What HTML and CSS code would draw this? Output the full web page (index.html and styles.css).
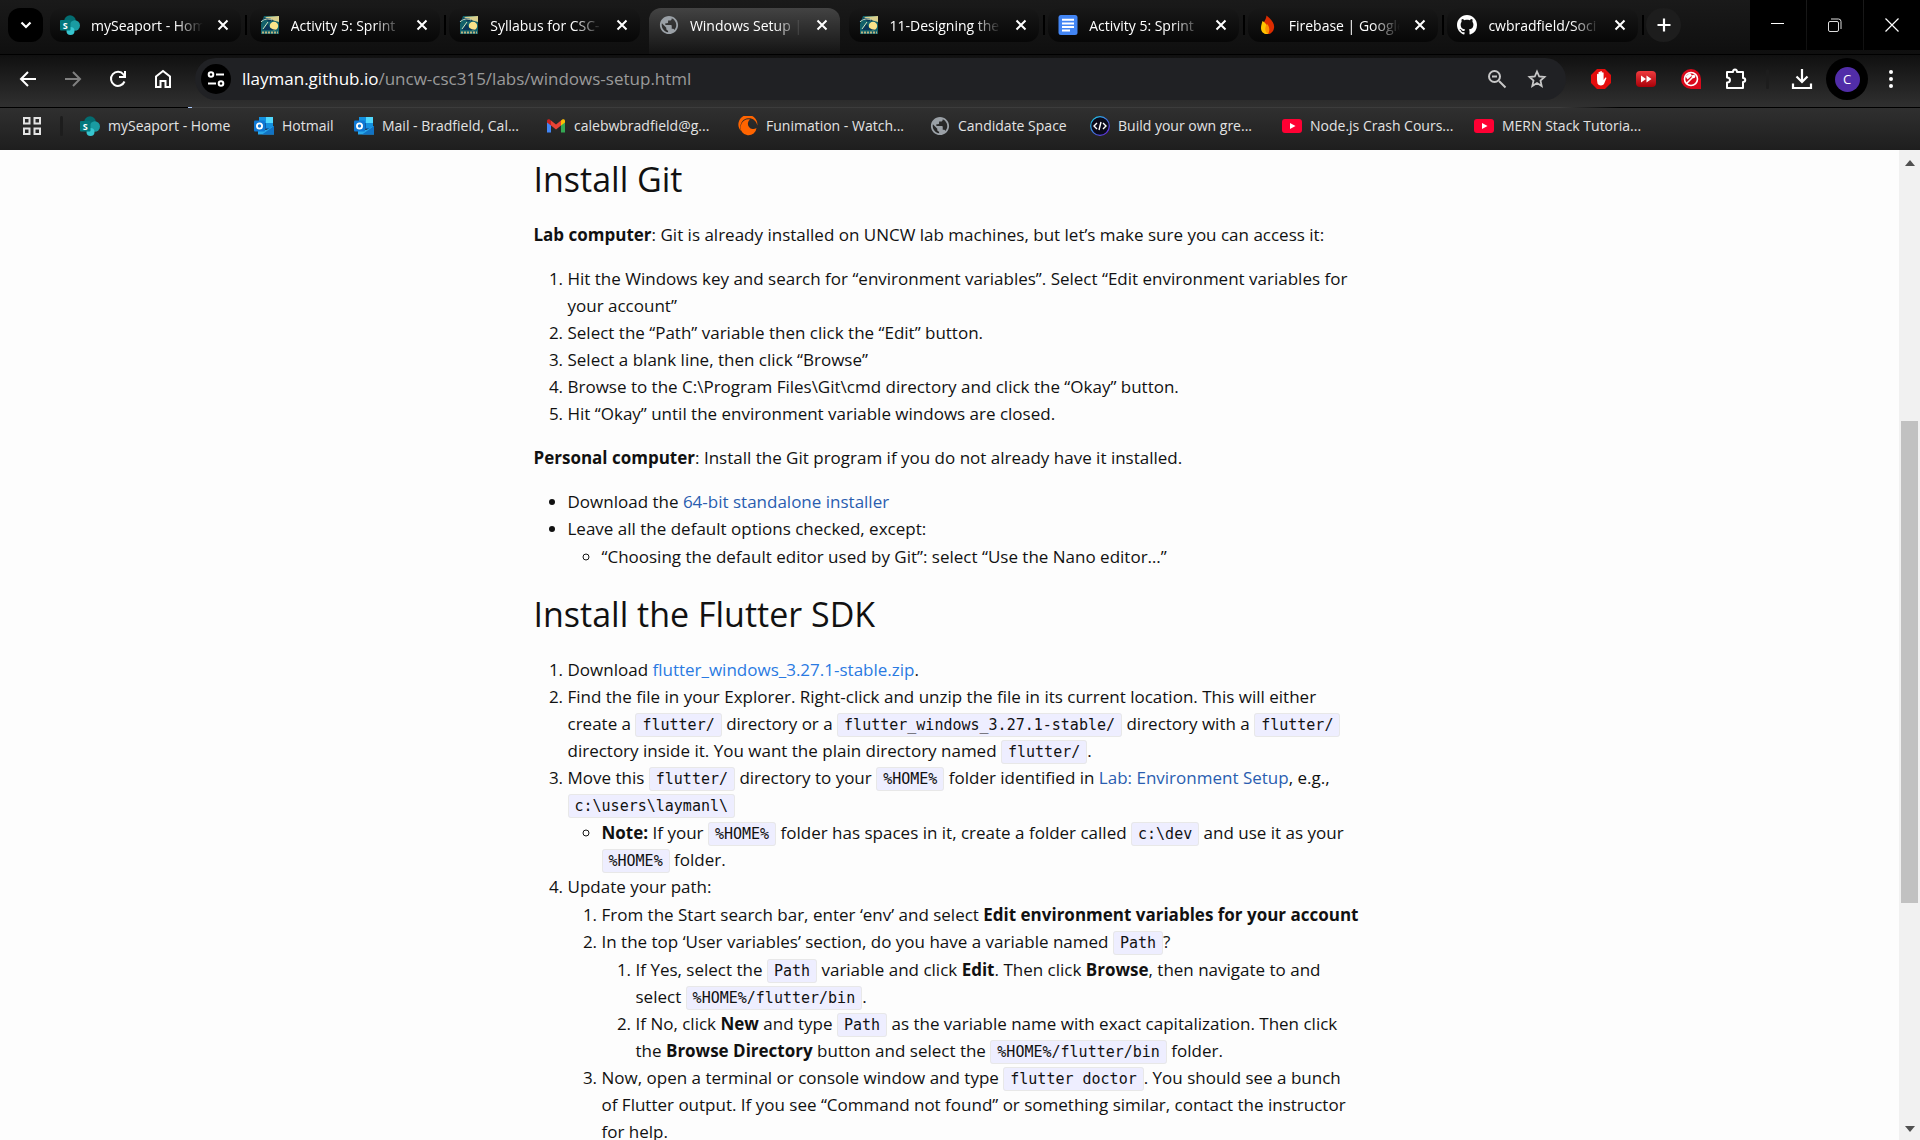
FILE: index.html
```html
<!DOCTYPE html>
<html lang="en">
<head>
<meta charset="utf-8">
<title>Windows Setup | CSC 315</title>
<link rel="stylesheet" href="styles.css">
</head>
<body>
<svg class="sprite" aria-hidden="true">
  <symbol id="i-close" viewBox="0 0 12 12"><path d="M1.5 1.5l9 9M10.5 1.5l-9 9" stroke="#fff" stroke-width="2" fill="none"/></symbol>
  <symbol id="i-share" viewBox="0 0 20 20"><circle cx="10" cy="6" r="5.800" fill="#036c70"/><circle cx="14.800" cy="10.500" r="5.200" fill="#1a9ba1"/><circle cx="10.500" cy="16" r="4" fill="#37c6d0"/><rect y="5" width="10.500" height="10.500" rx="1" fill="#03787c"/><text x="5.200" y="13.500" text-anchor="middle" font-size="9" font-weight="700" font-family="Open Sans, sans-serif" fill="#fff">S</text></symbol>
  <symbol id="i-wave" viewBox="0 0 20 20"><path d="M4 1h15v18H1V9z" fill="#12606a"/><path d="M5 2l14-1v6L8 4z" fill="#d9cf8d"/><circle cx="14" cy="11" r="4.200" fill="#fbe38a"/><path d="M0 7c3-5 10-5 14-1-5-1-7 2-5 5 1 3 6 4 10 4H3l6-8C7 4 3 5 0 7z" fill="#0b3557"/><path d="M1 7c3-3 7-4 11-2M8 7L3 14" stroke="#cfe3c0" fill="none"/><path d="M2 17.500h16" stroke="#b9b37f" stroke-width="2" stroke-dasharray="2 1"/></symbol>
  <symbol id="i-globe" viewBox="1 1 22 22"><path fill="#9aa0a6" d="M12 2C6.480 2 2 6.480 2 12s4.480 10 10 10 10-4.480 10-10S17.520 2 12 2zm-1 17.930c-3.950-.49-7-3.850-7-7.930 0-.62.08-1.210.21-1.790L9 15v1c0 1.100.9 2 2 2v1.930zm6.900-2.540c-.26-.81-1-1.390-1.900-1.390h-1v-3c0-.55-.45-1-1-1H8v-2h2c.55 0 1-.45 1-1V7h2c1.100 0 2-.9 2-2v-.41c2.930 1.190 5 4.060 5 7.410 0 2.080-.8 3.970-2.100 5.390z"/></symbol>
  <symbol id="i-doc" viewBox="0 0 20 20"><rect x=".5" width="19" height="20" rx="2.500" fill="#4285f4"/><path d="M4 4.800h12M4 8.400h12M4 12h12M4 15.600h8" stroke="#fff" stroke-width="2"/></symbol>
  <symbol id="i-fire" viewBox="0 0 20 20"><path d="M8.500.5c4 3 8.500 8 7.500 12.500-.5 4-4 6.500-7 6-3 0-5-3-5-6C4 8 8 6 8.500.5z" fill="#dd2c00"/><path d="M4.500 6c3 1.500 7 6 5.500 13-4 .5-7-2-7-6 0-3 1-5 1.500-7z" fill="#ffc400"/><path d="M9 9c2 2 3.500 6 1 10-3-2-4-6-1-10z" fill="#ff9100"/></symbol>
  <symbol id="i-github" viewBox="0 0 16 16"><path fill="#fff" d="M8 0C3.580 0 0 3.580 0 8c0 3.540 2.290 6.530 5.470 7.590.4.070.55-.17.55-.38 0-.19-.01-.82-.01-1.490-2.010.37-2.530-.49-2.690-.94-.09-.23-.48-.94-.82-1.130-.28-.15-.68-.52-.01-.53.63-.01 1.080.58 1.230.82.72 1.210 1.870.87 2.330.66.07-.52.28-.87.51-1.070-1.780-.2-3.640-.89-3.640-3.950 0-.87.31-1.590.82-2.150-.08-.2-.36-1.020.08-2.120 0 0 .67-.21 2.200.82.64-.18 1.320-.27 2-.27s1.360.09 2 .27c1.530-1.040 2.200-.82 2.200-.82.44 1.100.16 1.920.08 2.120.51.56.82 1.270.82 2.150 0 3.070-1.870 3.750-3.650 3.950.29.25.54.73.54 1.480 0 1.070-.01 1.930-.01 2.200 0 .21.15.46.55.38A8.010 8.010 0 0 0 16 8c0-4.420-3.580-8-8-8z"/></symbol>
  <symbol id="i-outlook" viewBox="0 0 20 20"><rect x="5" y="1" width="14" height="12" rx="1" fill="#0f5ea8"/><path d="M5 1h7v6H5z" fill="#1490df"/><path d="M12 1h7v6h-7z" fill="#50d9ff"/><path d="M12 7h7v5h-7z" fill="#1490df"/><path d="M4 10l8 4 8-4v8.500H4z" fill="#28a8ea"/><path d="M20 10v8.500H8z" fill="#1273c4"/><rect y="4.500" width="11" height="11" rx="1" fill="#0f78d4"/><circle cx="5.500" cy="10" r="2.600" fill="none" stroke="#fff" stroke-width="1.800"/></symbol>
  <symbol id="i-gmail" viewBox="0 0 20 20"><path d="M1 5v11.500h4V8z" fill="#4285f4"/><path d="M19 5v11.500h-4V8z" fill="#34a853"/><path d="M5 4.500v5l5 4 5-4v-5l-5 4z" fill="#ea4335"/><path d="M1 6.500V5c0-2 2-2 3-1.300l1 .8v5z" fill="#c5221f"/><path d="M19 6.500V5c0-2-2-2-3-1.300l-1 .8v5z" fill="#fbbc04"/></symbol>
  <symbol id="i-crunchy" viewBox="0 0 20 20"><path d="M3 15A9.500 9.500 0 1 1 19.300 9.500C18.500 4.500 14.500 1.800 10 2.200 4 2.800 1 9 3 15z" fill="#ff6400"/><path d="M18.500 12A8 8 0 1 1 12 3.500a4.300 4.300 0 1 0 6.500 8.500z" fill="#ff6400"/></symbol>
  <symbol id="i-code" viewBox="0 0 20 20"><defs><linearGradient id="ring" x2="1" y2="1"><stop stop-color="#19d4e8"/><stop offset="1" stop-color="#6a1be0"/></linearGradient></defs><circle cx="10" cy="10" r="9.300" fill="#0a0a1a" stroke="url(#ring)" stroke-width="1.200"/><path d="M7 7l-3 3 3 3M13 7l3 3-3 3M11 6l-2 8" stroke="#fff" stroke-width="1.400" fill="none"/></symbol>
  <symbol id="i-youtube" viewBox="0 0 20 20"><rect y="3" width="20" height="14" rx="3" fill="#f03"/><path d="M8 7l5.500 3L8 13z" fill="#fff"/></symbol>
</svg>

<header class="browser">
  <div class="tabstrip">
    <button class="tab-search" aria-label="Search tabs"><svg width="12" height="12" viewBox="0 0 12 12"><path d="M1.500 3.500L6 8l4.500-4.500" stroke="#fff" stroke-width="2.200" fill="none"/></svg></button>
    <nav class="tabs" aria-label="Open tabs">
      <div class="tab"><svg class="fav"><use href="#i-share"/></svg><span class="tab-title">mySeaport - Hom</span><button class="tab-close" aria-label="Close"><svg><use href="#i-close"/></svg></button></div>
      <div class="tab"><svg class="fav"><use href="#i-wave"/></svg><span class="tab-title">Activity 5: Sprint</span><button class="tab-close" aria-label="Close"><svg><use href="#i-close"/></svg></button></div>
      <div class="tab before-active"><svg class="fav"><use href="#i-wave"/></svg><span class="tab-title">Syllabus for CSC-</span><button class="tab-close" aria-label="Close"><svg><use href="#i-close"/></svg></button></div>
      <div class="tab active"><svg class="fav"><use href="#i-globe"/></svg><span class="tab-title">Windows Setup |</span><button class="tab-close" aria-label="Close"><svg><use href="#i-close"/></svg></button></div>
      <div class="tab"><svg class="fav"><use href="#i-wave"/></svg><span class="tab-title">11-Designing the</span><button class="tab-close" aria-label="Close"><svg><use href="#i-close"/></svg></button></div>
      <div class="tab"><svg class="fav"><use href="#i-doc"/></svg><span class="tab-title">Activity 5: Sprint</span><button class="tab-close" aria-label="Close"><svg><use href="#i-close"/></svg></button></div>
      <div class="tab"><svg class="fav"><use href="#i-fire"/></svg><span class="tab-title">Firebase | Google</span><button class="tab-close" aria-label="Close"><svg><use href="#i-close"/></svg></button></div>
      <div class="tab"><svg class="fav"><use href="#i-github"/></svg><span class="tab-title">cwbradfield/Soci</span><button class="tab-close" aria-label="Close"><svg><use href="#i-close"/></svg></button></div>
    </nav>
    <button class="new-tab" aria-label="New tab"><svg width="14" height="14" viewBox="0 0 14 14"><path d="M7 .5v13M.5 7h13" stroke="#fff" stroke-width="2.200"/></svg></button>
    <div class="window-controls">
      <button aria-label="Minimize"><svg width="14" height="14" viewBox="0 0 14 14"><path d="M0 5.500h13" stroke="#fff"/></svg></button>
      <button aria-label="Restore"><svg width="14" height="14" viewBox="0 0 14 14"><rect x=".5" y="3.500" width="10" height="10" rx="1.500" fill="none" stroke="#ddd"/><path d="M3 1h7.500A2.500 2.500 0 0 1 13 3.500V11" stroke="#ddd" fill="none"/></svg></button>
      <button aria-label="Close window"><svg width="14" height="14" viewBox="0 0 14 14"><path d="M.5.5l13 13M13.500.5l-13 13" stroke="#fff" stroke-width="1.200"/></svg></button>
    </div>
  </div>

  <div class="toolbar">
    <div class="nav-buttons">
      <button aria-label="Back"><svg width="18" height="18" viewBox="0 0 18 18"><path d="M17 9H3M9 2L2 9l7 7" stroke="#fff" stroke-width="2" fill="none"/></svg></button>
      <button aria-label="Forward"><svg width="18" height="18" viewBox="0 0 18 18"><path d="M1 9h14M9 2l7 7-7 7" stroke="#808080" stroke-width="2" fill="none"/></svg></button>
      <button aria-label="Reload"><svg width="18" height="18" viewBox="0 0 18 18"><path d="M15.500 11.500A7 7 0 1 1 14.500 4.500L16 6" stroke="#fff" stroke-width="2" fill="none"/><path d="M16 1v6h-6" stroke="#fff" stroke-width="2" fill="none"/></svg></button>
      <button aria-label="Home"><svg width="18" height="20" viewBox="0 0 18 20"><path d="M2 7.500L9 2l7 5.500V18h-4.500v-6h-5v6H2z" stroke="#fff" stroke-width="2" fill="none"/></svg></button>
    </div>
    <div class="omnibox">
      <button class="site-info" aria-label="Site information"><svg width="18" height="16" viewBox="0 0 18 16"><g stroke="#fff" stroke-width="2" fill="none"><circle cx="4" cy="3.500" r="2.300"/><path d="M9 3.500h8M1 12.500h8"/><circle cx="14" cy="12.500" r="2.300"/></g></svg></button>
      <div class="url" role="textbox" aria-label="Address" tabindex="0"><span>llayman.github.io</span>/uncw-csc315/labs/windows-setup.html</div>
      <button class="omni-btn" aria-label="Zoom"><svg width="20" height="20" viewBox="0 0 20 20"><g stroke="#c7c7c7" stroke-width="2" fill="none"><circle cx="7.500" cy="7.500" r="5.500"/><path d="M12 12l6.500 6.500M5 7.500h5"/></g></svg></button>
      <button class="omni-btn" aria-label="Bookmark"><svg width="20" height="20" viewBox="0 0 20 20"><path d="M10 2.500l2.200 5 5.300.5-4 3.600 1.200 5.400-4.700-2.900L5.300 17l1.200-5.400-4-3.600 5.300-.5z" stroke="#c7c7c7" stroke-width="1.800" fill="none"/></svg></button>
    </div>
    <div class="extensions">
      <button aria-label="Ad blocker"><svg width="22" height="22" viewBox="0 0 22 22"><path d="M7 1h8l6 6v8l-6 6H7l-6-6V7z" fill="#e40d0d"/><path d="M7 12V6.500c0-1 1.500-1 1.500 0V10 4.500c0-1 1.700-1 1.700 0V10 3.800c0-1 1.700-1 1.700 0V10 5c0-1 1.700-1 1.700 0v7l1.400-2c.7-.8 1.700-.2 1.300.6L14 16c-1 2-5.500 2-6.500-.5z" fill="#fff"/></svg></button>
      <button aria-label="Speed"><svg width="22" height="22" viewBox="0 0 22 22"><defs><linearGradient id="red" x2="0" y2="1"><stop stop-color="#ef3b3f"/><stop offset="1" stop-color="#a80008"/></linearGradient></defs><rect x="1" y="3" width="20" height="16" rx="4" fill="url(#red)"/><path d="M6 7.500l5 3.500-5 3.500zM11.500 7.500l5 3.500-5 3.500z" fill="#fff"/></svg></button>
      <button aria-label="Tracker"><svg width="22" height="22" viewBox="0 0 22 22"><path d="M11 1a10 10 0 0 1 10 10v10H11a10 10 0 0 1 0-20z" fill="#d9091b"/><circle cx="11" cy="11" r="6.500" fill="none" stroke="#fff" stroke-width="1.600"/><path d="M6.500 15.500L13 9" stroke="#fff" stroke-width="1.600"/><path d="M5.500 8.500L10 5l2 2.500-4.500 4z" fill="#fff"/><circle cx="13.500" cy="8.500" r="1.800" fill="#fff"/></svg></button>
      <button aria-label="Extensions"><svg width="22" height="22" viewBox="0 0 22 22"><path d="M2 4h6c0-3.500 4-3.500 4 0h6v6c3 0 3 4 0 4v6H2v-5.500c4 0 4-5 0-5z" stroke="#fff" stroke-width="2" stroke-linejoin="round" fill="none"/></svg></button>
      <span class="divider"></span>
      <button aria-label="Downloads"><svg width="22" height="22" viewBox="0 0 22 22"><path d="M11 1v12M5.500 8.500L11 14l5.500-5.500M2 15.500V20h18v-4.500" stroke="#fff" stroke-width="2.200" fill="none"/></svg></button>
      <button class="avatar" aria-label="Profile"><span>C</span></button>
      <button aria-label="Menu"><svg width="6" height="20" viewBox="0 0 6 20"><g fill="#fff"><circle cx="3" cy="3" r="2"/><circle cx="3" cy="10" r="2"/><circle cx="3" cy="17" r="2"/></g></svg></button>
    </div>
  </div>

  <nav class="bookmarks" aria-label="Bookmarks">
    <button class="apps" aria-label="Apps"><svg width="18" height="18" viewBox="0 0 18 18"><path d="M1 1h5.500v5.500H1zM11.500 1H17v5.500h-5.500zM1 11.500h5.500V17H1zM11.500 11.500H17V17h-5.500z" stroke="#e3e3e3" stroke-width="2" fill="none"/></svg></button>
    <span class="divider"></span>
    <a class="bm w-home" href="#"><svg class="fav"><use href="#i-share"/></svg>mySeaport - Home</a>
    <a class="bm w-mail" href="#"><svg class="fav"><use href="#i-outlook"/></svg>Hotmail</a>
    <a class="bm" href="#"><svg class="fav"><use href="#i-outlook"/></svg>Mail - Bradfield, Cal...</a>
    <a class="bm" href="#"><svg class="fav"><use href="#i-gmail"/></svg>calebwbradfield@g...</a>
    <a class="bm" href="#"><svg class="fav"><use href="#i-crunchy"/></svg>Funimation - Watch...</a>
    <a class="bm w-space" href="#"><svg class="fav"><use href="#i-globe"/></svg>Candidate Space</a>
    <a class="bm" href="#"><svg class="fav"><use href="#i-code"/></svg>Build your own gre...</a>
    <a class="bm" href="#"><svg class="fav"><use href="#i-youtube"/></svg>Node.js Crash Cours...</a>
    <a class="bm" href="#"><svg class="fav"><use href="#i-youtube"/></svg>MERN Stack Tutoria...</a>
  </nav>
</header>

<div class="viewport">
  <main class="page">
    <article>
      <h1>Install Git</h1>
      <p><strong>Lab computer</strong>: Git is already installed on UNCW lab machines, but let’s make sure you can access it:</p>
      <ol>
        <li>Hit the Windows key and search for “environment variables”. Select “Edit environment variables for your account”</li>
        <li>Select the “Path” variable then click the “Edit” button.</li>
        <li>Select a blank line, then click “Browse”</li>
        <li>Browse to the C:\Program Files\Git\cmd directory and click the “Okay” button.</li>
        <li>Hit “Okay” until the environment variable windows are closed.</li>
      </ol>
      <p><strong>Personal computer</strong>: Install the Git program if you do not already have it installed.</p>
      <ul>
        <li>Download the <a href="#">64-bit standalone installer</a></li>
        <li>Leave all the default options checked, except:
          <ul><li>“Choosing the default editor used by Git”: select “Use the Nano editor…”</li></ul>
        </li>
      </ul>
      <h1>Install the Flutter SDK</h1>
      <ol>
        <li>Download <a class="fresh" href="#">flutter_windows_3.27.1-stable.zip</a>.</li>
        <li>Find the file in your Explorer. Right-click and unzip the file in its current location. This will either create a <code>flutter/</code> directory or a <code>flutter_windows_3.27.1-stable/</code> directory with a <code>flutter/</code> directory inside it. You want the plain directory named <code>flutter/</code>.</li>
        <li>Move this <code>flutter/</code> directory to your <code>%HOME%</code> folder identified in <a href="#">Lab: Environment Setup</a>, e.g., <code>c:\users\laymanl\</code>
          <ul><li><strong>Note:</strong> If your <code>%HOME%</code> folder has spaces in it, create a folder called <code>c:\dev</code> and use it as your <code>%HOME%</code> folder.</li></ul>
        </li>
        <li>Update your path:
          <ol>
            <li>From the Start search bar, enter ‘env’ and select <strong>Edit environment variables for your account</strong></li>
            <li>In the top ‘User variables’ section, do you have a variable named <code>Path</code>?
              <ol>
                <li>If Yes, select the <code>Path</code> variable and click <strong>Edit</strong>. Then click <strong>Browse</strong>, then navigate to and select <code>%HOME%/flutter/bin</code>.</li>
                <li>If No, click <strong>New</strong> and type <code>Path</code> as the variable name with exact capitalization. Then click the <strong>Browse Directory</strong> button and select the <code>%HOME%/flutter/bin</code> folder.</li>
              </ol>
            </li>
            <li>Now, open a terminal or console window and type <code>flutter doctor</code>. You should see a bunch of Flutter output. If you see “Command not found” or something similar, contact the instructor for help.</li>
          </ol>
        </li>
      </ol>
    </article>
  </main>
  <div class="scrollbar" aria-hidden="true">
    <svg width="10" height="6" viewBox="0 0 10 6"><path d="M0 6l5-6 5 6z" fill="#505050"/></svg>
    <div class="track"><div class="thumb"></div></div>
    <svg width="10" height="6" viewBox="0 0 10 6"><path d="M0 0l5 6 5-6z" fill="#505050"/></svg>
  </div>
</div>
</body>
</html>
```
FILE: styles.css
```css
* { box-sizing: border-box; }
body {
  margin: 0;
  height: 100vh;
  display: flex;
  flex-direction: column;
  overflow: hidden;
  font-family: "Open Sans", "Noto Sans", sans-serif;
  background: #fdfdfd;
}
button {
  display: flex;
  align-items: center;
  justify-content: center;
  padding: 0;
  border: 0;
  background: none;
  color: inherit;
  font: inherit;
}
.sprite { position: absolute; width: 0; height: 0; }
.fav { width: 20px; height: 20px; flex: none; }

/* Browser frame */
.browser { flex: none; color: #fff; background: #141414; }
.tabstrip {
  display: flex;
  height: 55px;
  padding-left: 8px;
  background: linear-gradient(#1a1a1a, #0f0f0f);
  border-bottom: 1px solid #000;
}
.tab-search { width: 35px; height: 34px; margin: 8px 7px 0 0; border-radius: 12px; background: #000; }
.tabs { display: flex; gap: 9px; flex: 0 1 1588px; min-width: 0; }
.tab {
  position: relative;
  display: flex;
  align-items: center;
  flex: 1 1 0;
  min-width: 0;
  height: 34px;
  margin-top: 8px;
  padding: 0 12px 0 10px;
  border-radius: 12px;
  background: linear-gradient(#181818, #070707);
}
.tab:not(.active):not(.before-active)::after {
  content: "";
  position: absolute;
  right: -6px;
  top: 7px;
  width: 2px;
  height: 20px;
  background: #000;
}
.tab.active {
  height: 46px;
  padding-bottom: 12px;
  border-radius: 12px 12px 0 0;
  background: linear-gradient(#434343, #141414);
}
.tab-title {
  flex: 1;
  min-width: 0;
  margin: 0 14px 0 11px;
  overflow: hidden;
  white-space: nowrap;
  font-size: 14px;
  -webkit-mask-image: linear-gradient(to right, #000 75%, transparent);
  mask-image: linear-gradient(to right, #000 75%, transparent);
}
.tab-close svg { width: 12px; height: 12px; }
.new-tab { width: 35px; height: 34px; margin: 8px 0 0 8px; border-radius: 17px; background: #1d1d1d; }
.window-controls { display: flex; gap: 1px; margin-left: auto; }
.window-controls button { width: 56px; height: 50px; background: #000; }

.toolbar {
  display: flex;
  align-items: center;
  height: 52px;
  padding-top: 3px;
  padding-bottom: 7px;
  background: linear-gradient(#101010, #303030);
}
.nav-buttons { display: flex; padding-left: 5px; }
.nav-buttons button { width: 45px; height: 36px; }
.omnibox {
  display: flex;
  align-items: center;
  flex: 1;
  min-width: 0;
  height: 42px;
  margin-left: 10px;
  padding: 0 9px 0 6px;
  border-radius: 21px;
  background: #202124;
}
.site-info { width: 30px; height: 30px; border-radius: 50%; background: #000; }
.url { flex: 1; min-width: 0; margin-left: 11px; padding-bottom: 2px; font-size: 17px; color: #9a9a9a; white-space: nowrap; overflow: hidden; }
.url span { color: #fff; }
.omni-btn { width: 40px; height: 36px; }
.extensions { display: flex; align-items: center; width: 354px; padding-left: 12px; }
.extensions > button { width: 45px; height: 40px; flex: none; }
.extensions .divider { margin: 0 10px 0 8px; }
.divider { width: 3px; height: 20px; flex: none; border-radius: 2px; background: #1d1d1d; }
.extensions .avatar { width: 42px; height: 42px; margin-left: 2px; border-radius: 50%; background: #000; }
.avatar span { width: 25px; height: 25px; border-radius: 50%; background: #512da8; font-size: 13px; line-height: 25px; }

.bookmarks {
  display: flex;
  align-items: center;
  height: 43px;
  padding: 0 0 6px 23px;
  background:
    linear-gradient(to right, #000 188px, #a8c7fa 188px, #a8c7fa 192px, #3c3c3c 192px, #3c3c3c calc(100% - 360px), #000 calc(100% - 300px)) top / 100% 1px no-repeat,
    linear-gradient(#303030, #1e1e1e);
}
.bookmarks .divider { margin: 0 17px 0 19px; }
.bm {
  display: flex;
  align-items: center;
  gap: 8px;
  width: 192px;
  flex: none;
  color: #e3e3e3;
  font-size: 14px;
  text-decoration: none;
  white-space: nowrap;
}
.w-home { width: 174px; }
.w-mail { width: 100px; }
.w-space { width: 160px; }

/* Document */
.viewport { display: flex; flex: 1; min-height: 0; }
.page { flex: 1; min-width: 0; overflow: hidden; }
article { max-width: 832px; margin: 0 auto; padding: 2px 6px 0 0; color: #111; font-size: 17px; line-height: 27px; }
h1 { margin: 0 0 15px; font-size: 34px; line-height: 54px; font-weight: 400; }
p { margin: 0 0 17px; }
ol, ul { margin: 0 0 17px; padding-left: 34px; }
li ol, li ul { margin: 1px 0 0; }
a { color: #2a5db0; text-decoration: none; }
a.fresh { color: #2a7ae2; }
code {
  padding: 2px 6px;
  border: 1px solid #e8e8e8;
  border-radius: 3px;
  background: #eef;
  font-family: "DejaVu Sans Mono", monospace;
  font-size: 15px;
  line-height: 24px;
}
.scrollbar {
  display: flex;
  flex-direction: column;
  align-items: center;
  width: 21px;
  padding: 10px 0 8px;
  background: #f1f1f1;
}
.track { display: flex; flex-direction: column; flex: 1; padding: 255px 0 223px; }
.thumb { flex: 1; width: 17px; background: #c1c1c1; }
```
